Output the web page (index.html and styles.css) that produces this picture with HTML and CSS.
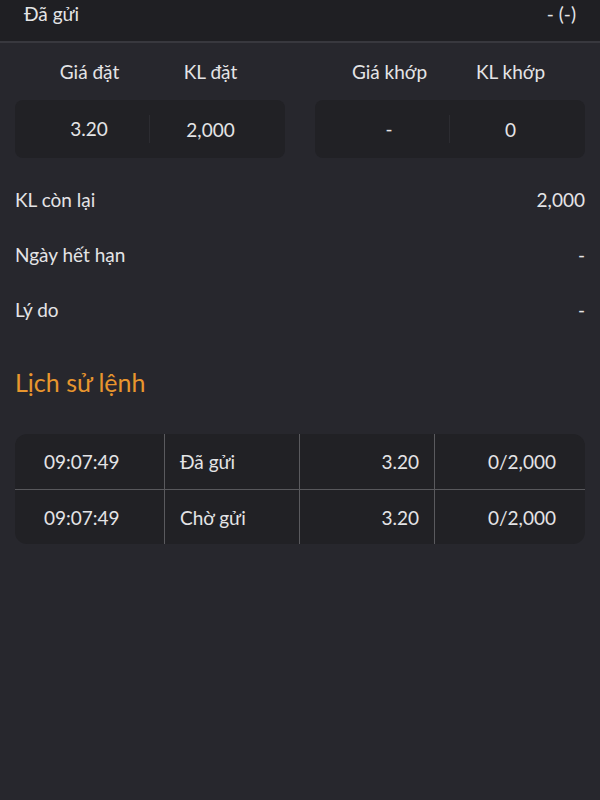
FILE: index.html
```html
<!DOCTYPE html>
<html lang="vi">
<head>
    <meta charset="UTF-8">
    <meta name="viewport" content="width=device-width, initial-scale=1.0">
    <title>Chi tiết lệnh</title>
    <link rel="stylesheet" href="styles.css">
</head>
<body>

    <div class="status-bar">
        <span>Đã gửi</span>
        <span>- (-)</span>
    </div>

    <div class="content">
        <div class="pairs">
            <div class="pair">
                <div class="pair-head">
                    <span>Giá đặt</span>
                    <span>KL đặt</span>
                </div>
                <div class="pair-box">
                    <span>3.20</span>
                    <span>2,000</span>
                </div>
            </div>
            <div class="pair">
                <div class="pair-head">
                    <span>Giá khớp</span>
                    <span>KL khớp</span>
                </div>
                <div class="pair-box">
                    <span>-</span>
                    <span>0</span>
                </div>
            </div>
        </div>

        <div class="info-row">
            <span>KL còn lại</span>
            <span>2,000</span>
        </div>
        <div class="info-row">
            <span>Ngày hết hạn</span>
            <span>-</span>
        </div>
        <div class="info-row">
            <span>Lý do</span>
            <span>-</span>
        </div>

        <h2 class="section-title">Lịch sử lệnh</h2>

        <div class="history">
            <div class="history-row">
                <div class="cell">09:07:49</div>
                <div class="cell">Đã gửi</div>
                <div class="cell num">3.20</div>
                <div class="cell num">0/2,000</div>
            </div>
            <div class="history-row">
                <div class="cell">09:07:49</div>
                <div class="cell">Chờ gửi</div>
                <div class="cell num">3.20</div>
                <div class="cell num">0/2,000</div>
            </div>
        </div>
    </div>

</body>
</html>
```

FILE: styles.css
```css
* {
    margin: 0;
    padding: 0;
    box-sizing: border-box;
}
body {
    background: #27272d;
    color: #e4e4e6;
    font-family: Lato, "Noto Sans", sans-serif;
    font-size: 19px;
    width: 600px;
    height: 800px;
}
.status-bar {
    background: #1f1f23;
    height: 43px;
    border-bottom: 2px solid #38383e;
    display: flex;
    justify-content: space-between;
    padding: 2px 24px 0 24px;
    line-height: 24px;
}
.content {
    padding: 0 15px;
}
.pairs {
    display: flex;
    gap: 30px;
    padding-top: 16px;
}
.pair {
    flex: 1;
}
.pair-head, .pair-box {
    display: grid;
    grid-template-columns: 1fr 1fr;
    padding: 0 14px;
    text-align: center;
}
.pair-head {
    line-height: 26px;
    margin-bottom: 15px;
}
.pair-box {
    background: #212125;
    border-radius: 8px;
    height: 58px;
    align-items: center;
}
.pair-box span:first-child {
    border-right: 1px solid #2c2c31;
    line-height: 28px;
}
.info-row {
    display: flex;
    justify-content: space-between;
    height: 55px;
    align-items: center;
}
.pairs + .info-row {
    margin-top: 14px;
}
.section-title {
    color: #e8962e;
    font-weight: normal;
    font-size: 25px;
    line-height: 30px;
    margin: 30px 0 37px;
}
.history {
    background: #212125;
    border-radius: 12px;
    overflow: hidden;
}
.history-row {
    display: grid;
    grid-template-columns: 150px 135px 135px 150px;
    height: 55px;
    align-items: stretch;
}
.history-row + .history-row {
    border-top: 1px solid #58585c;
}
.cell {
    display: flex;
    align-items: center;
    padding: 0 15px;
    border-right: 1px solid #5a5a5e;
}
.cell:first-child {
    padding-left: 29px;
}
.cell:last-child {
    border-right: none;
    padding-right: 29px;
}
.cell.num {
    justify-content: flex-end;
}
```
